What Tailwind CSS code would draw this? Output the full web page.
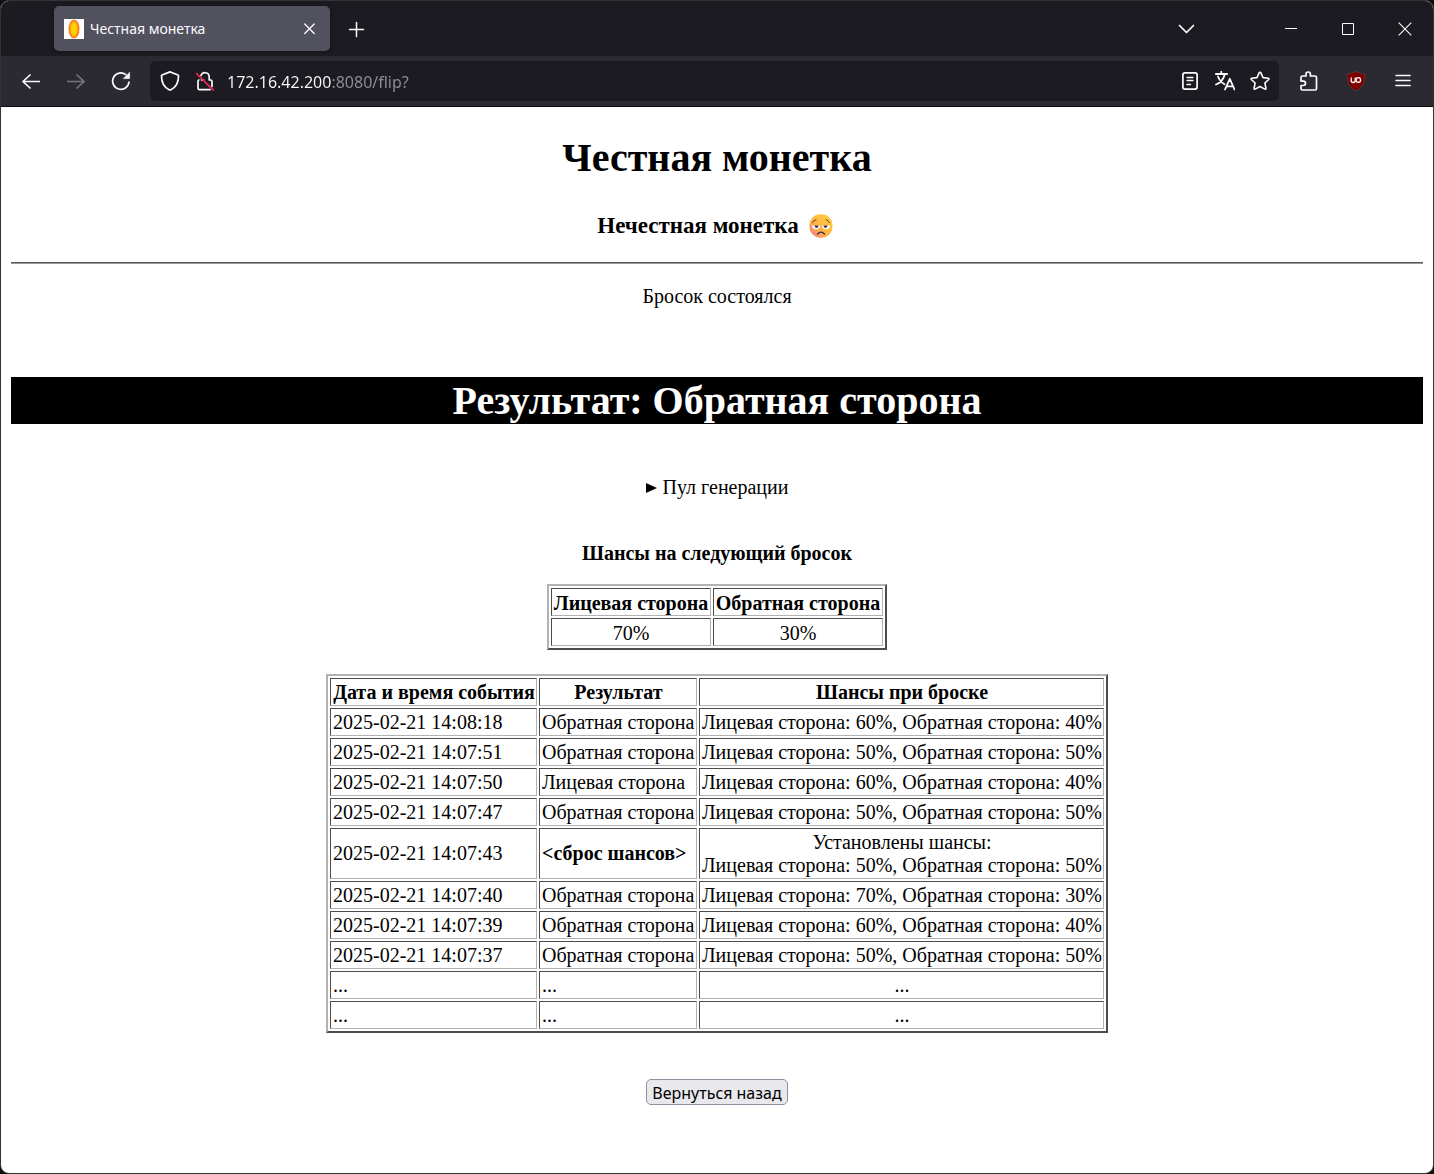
<!DOCTYPE html>
<html lang="ru">
<head>
<meta charset="utf-8">
<meta name="viewport" content="width=device-width, initial-scale=1">
<title>Честная монетка</title>
<script src="https://cdn.jsdelivr.net/npm/@tailwindcss/browser@4"></script>
</head>
<body class="bg-[#0b120c]">
<div class="flex min-h-screen flex-col overflow-hidden rounded-[9px] border border-[#333333] bg-white">
  <header class="font-['Noto_Sans',sans-serif] text-[#fbfbfe]">
    <!-- Tab strip -->
    <div class="flex h-[55px] items-center bg-[#1c1b22] pl-[53px]">
      <div class="flex h-[45px] w-[276px] items-center rounded-[5px] bg-[#52525e] px-2.5 shadow-[0_0_4px_#00000066]">
        <svg class="size-5 shrink-0" viewBox="0 0 20 20"><rect width="20" height="20" fill="#fff"/><ellipse cx="10" cy="10" rx="4.5" ry="8.6" fill="#ffd700" stroke="#ff7f27" stroke-width="2"/><ellipse cx="10" cy="10" rx="2.2" ry="6" fill="none" stroke="#f5b800" stroke-width=".7"/></svg>
        <span class="ml-1.5 grow whitespace-nowrap text-sm">Честная монетка</span>
        <button class="flex size-5 items-center justify-center" aria-label="Закрыть вкладку"><svg class="size-5" viewBox="0 0 20 20" fill="none" stroke="currentColor" stroke-width="1.3" stroke-linecap="round"><path d="M4.700 5l9.500 9.500M14.200 5l-9.500 9.500"/></svg></button>
      </div>
      <button class="ml-4 size-5" aria-label="Новая вкладка"><svg viewBox="0 0 20 20" fill="none" stroke="currentColor" stroke-width="1.5" stroke-linecap="round"><path d="M10.5 3.5v14M3.5 10.5h14"/></svg></button>
      <div class="grow"></div>
      <button class="mr-[53px] size-[46px]" aria-label="Список вкладок"><svg viewBox="0 0 46 46" fill="none" stroke="currentColor" stroke-width="1.700" stroke-linecap="round" stroke-linejoin="round"><path d="M16.5 19.500l7 7 7-7"/></svg></button>
      <button class="flex h-full w-[57px] items-center justify-center" aria-label="Свернуть"><svg class="size-3" viewBox="0 0 12 12" stroke="currentColor"><path d="M0 5.500h12"/></svg></button>
      <button class="flex h-full w-[57px] items-center justify-center" aria-label="Развернуть"><svg class="size-3" viewBox="0 0 12 12" fill="none" stroke="currentColor"><path d="M.5.5h11v11H.5z"/></svg></button>
      <button class="flex h-full w-[57px] items-center justify-center" aria-label="Закрыть"><svg class="size-3.5" viewBox="0 0 14 14" fill="none" stroke="currentColor" stroke-width="1.100"><path d="M.7.7l12.600 12.600M13.300.7L.7 13.300"/></svg></button>
    </div>
    <!-- Navigation bar -->
    <div class="flex h-[51px] items-center border-b border-[#0c0c0d] bg-[#2b2a33] pr-5 pl-5">
      <button class="size-5" aria-label="Назад"><svg viewBox="0 0 20 20" fill="none" stroke="currentColor" stroke-width="1.700" stroke-linecap="round" stroke-linejoin="round"><path d="M18.300 10.500H2M9 4L2 10.500l7 6.500"/></svg></button>
      <button class="ml-[25px] size-5 text-[#77767e]" aria-label="Вперёд" disabled><svg viewBox="0 0 20 20" fill="none" stroke="currentColor" stroke-width="1.700" stroke-linecap="round" stroke-linejoin="round"><path d="M1.700 10.500H18M11 4l7 6.500-7 6.500"/></svg></button>
      <button class="ml-[25px] size-5" aria-label="Обновить"><svg viewBox="0 0 20 20" fill="none" stroke="currentColor" stroke-width="1.700" stroke-linecap="round"><path d="M18 11a8.200 8.200 0 1 1-3.200-7.400"/><path d="M18.600 1.600v6h-6z" fill="currentColor" stroke-width=".6" stroke-linejoin="round"/></svg></button>
      <div class="ml-[19px] flex h-10 min-w-0 grow items-center rounded-[5px] bg-[#1c1b22] pr-[9px] pl-2.5">
        <svg class="size-5 shrink-0" viewBox="0 0 20 20" fill="none" stroke="currentColor" stroke-width="1.700" stroke-linejoin="round"><path d="M10 .9l8 3.100c.6.2.5.6.5 1.200 0 6.300-3 11.200-7.600 13.500q-.9.4-1.800 0C4.500 16.400 1.500 11.500 1.500 5.200c0-.6-.1-1 .5-1.200z"/></svg>
        <svg class="ml-[15px] size-5 shrink-0" viewBox="0 0 20 20" fill="none" stroke="currentColor" stroke-width="1.700" stroke-linecap="round" stroke-linejoin="round"><path d="M6 4.600a4.200 4.200 0 0 1 8.200 1.200V9h1.300q1.500 0 1.500 1.500v5M3.800 9q-.8.400-.8 1.500v6.700q0 1.500 1.500 1.500h10.500M6.500 8.800h2"/><path d="M1.700 2.600l16.500 16.500" stroke="#e22850" stroke-width="1.900"/></svg>
        <input class="ml-3 min-w-0 grow bg-linear-[90deg,#fbfbfe_104px,#8f8f98_104px] bg-clip-text pt-0.5 text-base text-transparent outline-none" type="text" aria-label="Адрес" value="172.16.42.200:8080/flip?">
        <button class="size-5 shrink-0" aria-label="Режим чтения"><svg viewBox="0 0 20 20" fill="none" stroke="currentColor" stroke-width="1.700" stroke-linecap="round"><rect x="2.900" y="1.900" width="14.200" height="16.200" rx="2"/><path d="M7 6.500h6M7 9.500h6M7 13.500h3.500" stroke-width="1.300"/></svg></button>
        <button class="ml-[15px] size-5 shrink-0" aria-label="Перевести"><svg viewBox="0 0 20 20" fill="none" stroke="currentColor" stroke-width="1.800" stroke-linecap="round" stroke-linejoin="round"><path d="M.8 3h11.400M6.300.8V3M3 5.500c1.500 4 4 6.500 6.500 7.700M9.700 3.500C8.500 8.500 5 12 1 13.500M10 18.500l4.800-10.700L19.500 18.500M11.600 15.300h6.500"/></svg></button>
        <button class="ml-[15px] size-5 shrink-0" aria-label="Добавить в закладки"><svg viewBox="0 0 20 20" fill="none" stroke="currentColor" stroke-width="1.600" stroke-linejoin="round"><path d="M10 1.200q.6 0 .9.700l2.100 4.700 5.200.6q1.300.3.500 1.300l-3.800 3.500 1 5.200q.1 1.300-1.100.9L10 15.500l-4.800 2.600q-1.200.4-1.100-.9l1-5.200L1.300 8.500q-.8-1 .5-1.300L7 6.600l2.100-4.700q.3-.7.9-.7z"/></svg></button>
      </div>
      <button class="ml-5 size-5" aria-label="Расширения"><svg viewBox="0 0 20 20" fill="none" stroke="currentColor" stroke-width="1.700" stroke-linejoin="round"><path d="M2 8V6.500Q2 5 3.500 5H7V3.200a2.200 2.200 0 0 1 4.400 0V5H16q1.500 0 1.500 1.500v11q0 1.500-1.500 1.500H3.500Q2 19 2 17.500V14.500h2.300a2.200 2.200 0 0 0 0-4.400H2z"/></svg></button>
      <button class="ml-[27px] size-5" aria-label="uBlock Origin"><svg viewBox="0 0 20 20" fill="none"><path d="M10 .3C7.500 2 4 2.800 1.200 2.800c0 8 .6 12.700 8.800 16.900 8.200-4.200 8.800-8.900 8.800-16.900C16 2.800 12.500 2 10 .3z" fill="#800000" stroke="#5c4a52" stroke-width=".6"/><path d="M5.200 6.500v3a2 2 0 0 0 4 0V6.500" stroke="#fff" stroke-width="1.300"/><circle cx="12.300" cy="9" r="2.300" stroke="#fff" stroke-width="1.300"/></svg></button>
      <button class="ml-[27px] size-5" aria-label="Меню"><svg viewBox="0 0 20 20" fill="none" stroke="currentColor" stroke-width="1.600" stroke-linecap="round"><path d="M3 4.500h14M3 9.500h14M3 14.500h14"/></svg></button>
    </div>
  </header>

  <main class="flex grow flex-col items-center px-2.5 pt-7 text-center font-['Liberation_Serif',serif] text-xl leading-[23px] text-black">
    <h1 class="text-[40px] leading-[46px] font-bold">Честная монетка</h1>
    <h3 class="mt-8 flex items-center text-[23px] leading-[26px] font-bold">Нечестная монетка
      <svg class="mr-1 ml-2.5 size-6" viewBox="0 0 24 24" role="img" aria-label="Разочарованное лицо">
        <defs><linearGradient id="face" x1="1" y1="0" x2="0" y2="1"><stop offset="0" stop-color="#ffd53a"/><stop offset=".65" stop-color="#ffad48"/><stop offset="1" stop-color="#f0679c"/></linearGradient></defs>
        <rect x=".5" y=".3" width="23" height="23.400" rx="10.500" fill="url(#face)"/>
        <path d="M3 11.500h8a4 3.800 0 0 1-8 0zM13 11.500h8a4 3.800 0 0 1-8 0z" fill="#fff"/>
        <path d="M5.500 11.500h4a2 2.400 0 0 1-4 0zM14.500 11.500h4a2 2.400 0 0 1-4 0z" fill="#3c2a55"/>
        <path d="M3.500 8.700q1-2.700 3.500-3M20.500 8.700q-1-2.700-3.500-3" fill="none" stroke="#6b4430" stroke-linecap="round"/>
        <path d="M8.500 20q3.500-3.600 7 0" fill="none" stroke="#3c2a55" stroke-width="1.300" stroke-linecap="round"/>
      </svg>
    </h3>
    <hr class="mt-[23px] h-0.5 w-full border-t border-b border-t-[#555555] border-b-[#999999]">
    <p class="mt-[21px]">Бросок состоялся</p>
    <h1 class="mt-[69px] w-full bg-black text-[40px] leading-[47px] font-bold text-white">Результат: Обратная сторона</h1>
    <details class="mt-[52px]">
      <summary class="flex list-none items-center justify-center gap-1.5"><svg class="h-2.5 w-[11px]" viewBox="0 0 11 10"><path d="M0 0l11 5L0 10z"/></svg>Пул генерации</summary>
    </details>
    <h4 class="mt-[43px] font-bold">Шансы на следующий бросок</h4>
    <table class="mt-[19px] w-[340px] table-fixed border-separate border-spacing-0.5 border-2 border-t-[#b2b2b2] border-r-[#4c4c4c] border-b-[#4c4c4c] border-l-[#b2b2b2] [&_:is(th,td)]:border [&_:is(th,td)]:border-t-[#4c4c4c] [&_:is(th,td)]:border-r-[#b2b2b2] [&_:is(th,td)]:border-b-[#b2b2b2] [&_:is(th,td)]:border-l-[#4c4c4c] [&_:is(th,td)]:px-px [&_:is(th,td)]:pt-0.5 [&_:is(th,td)]:whitespace-nowrap [&_tr]:h-7">
      <thead><tr><th class="w-[160px]">Лицевая сторона</th><th>Обратная сторона</th></tr></thead>
      <tbody><tr><td>70%</td><td>30%</td></tr></tbody>
    </table>
    <table class="mt-6 w-[782px] table-fixed border-separate border-spacing-0.5 border-2 border-t-[#b2b2b2] border-r-[#4c4c4c] border-b-[#4c4c4c] border-l-[#b2b2b2] text-left [&_:is(th,td)]:border [&_:is(th,td)]:border-t-[#4c4c4c] [&_:is(th,td)]:border-r-[#b2b2b2] [&_:is(th,td)]:border-b-[#b2b2b2] [&_:is(th,td)]:border-l-[#4c4c4c] [&_:is(th,td)]:p-px [&_:is(th,td)]:pl-0.5 [&_:is(th,td)]:whitespace-nowrap [&_td:last-child]:text-center [&_th]:text-center [&_tr]:h-7">
      <thead><tr><th class="w-[207px]">Дата и время события</th><th class="w-[158px]">Результат</th><th>Шансы при броске</th></tr></thead>
      <tbody>
        <tr><td>2025-02-21 14:08:18</td><td>Обратная сторона</td><td>Лицевая сторона: 60%, Обратная сторона: 40%</td></tr>
        <tr><td>2025-02-21 14:07:51</td><td>Обратная сторона</td><td>Лицевая сторона: 50%, Обратная сторона: 50%</td></tr>
        <tr><td>2025-02-21 14:07:50</td><td>Лицевая сторона</td><td>Лицевая сторона: 60%, Обратная сторона: 40%</td></tr>
        <tr><td>2025-02-21 14:07:47</td><td>Обратная сторона</td><td>Лицевая сторона: 50%, Обратная сторона: 50%</td></tr>
        <tr><td class="h-[51px]">2025-02-21 14:07:43</td><td><b>&lt;сброс шансов&gt;</b></td><td>Установлены шансы:<br>Лицевая сторона: 50%, Обратная сторона: 50%</td></tr>
        <tr><td>2025-02-21 14:07:40</td><td>Обратная сторона</td><td>Лицевая сторона: 70%, Обратная сторона: 30%</td></tr>
        <tr><td>2025-02-21 14:07:39</td><td>Обратная сторона</td><td>Лицевая сторона: 60%, Обратная сторона: 40%</td></tr>
        <tr><td>2025-02-21 14:07:37</td><td>Обратная сторона</td><td>Лицевая сторона: 50%, Обратная сторона: 50%</td></tr>
        <tr><td>...</td><td>...</td><td>...</td></tr>
        <tr><td>...</td><td>...</td><td>...</td></tr>
      </tbody>
    </table>
    <button class="mt-[46px] h-[26px] w-[142px] rounded-[5px] border border-[#8f8f9d] bg-[#e9e9ed] pt-px font-['Noto_Sans',sans-serif] text-base leading-6 whitespace-nowrap">Вернуться назад</button>
  </main>
</div>
</body>
</html>
